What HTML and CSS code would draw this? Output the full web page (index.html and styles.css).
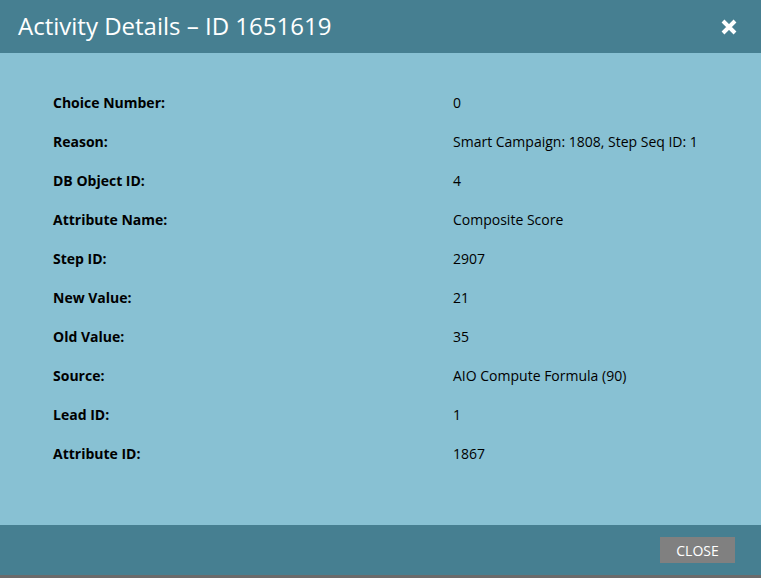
FILE: index.html
```html
<!DOCTYPE html>
<html>
<head>
<meta charset="utf-8">
<link rel="stylesheet" href="styles.css">
</head>
<body>
<div class="dialog">
  <div class="header">
    <h1 class="title">Activity Details – ID 1651619</h1>
    <button class="x-btn" aria-label="Close">
      <svg width="16" height="16" viewBox="0 0 16 16"><path d="M2 2 L14 14 M14 2 L2 14" stroke="#fff" stroke-width="4" stroke-linecap="butt"/></svg>
    </button>
  </div>
  <div class="content">
    <div class="row"><div class="label">Choice Number:</div><div class="value">0</div></div>
    <div class="row"><div class="label">Reason:</div><div class="value">Smart Campaign: 1808, Step Seq ID: 1</div></div>
    <div class="row"><div class="label">DB Object ID:</div><div class="value">4</div></div>
    <div class="row"><div class="label">Attribute Name:</div><div class="value">Composite Score</div></div>
    <div class="row"><div class="label">Step ID:</div><div class="value">2907</div></div>
    <div class="row"><div class="label">New Value:</div><div class="value">21</div></div>
    <div class="row"><div class="label">Old Value:</div><div class="value">35</div></div>
    <div class="row"><div class="label">Source:</div><div class="value">AIO Compute Formula (90)</div></div>
    <div class="row"><div class="label">Lead ID:</div><div class="value">1</div></div>
    <div class="row"><div class="label">Attribute ID:</div><div class="value">1867</div></div>
  </div>
  <div class="footer">
    <button class="close-btn">CLOSE</button>
  </div>
</div>
</body>
</html>
```
FILE: styles.css
```css
* { box-sizing: border-box; }
html, body { margin: 0; padding: 0; }
body {
  width: 761px;
  height: 578px;
  background: #6b6b6b;
  font-family: "Open Sans", "Liberation Sans", sans-serif;
  overflow: hidden;
}
.dialog {
  display: flex;
  flex-direction: column;
  height: 575px;
}
.header {
  flex: 0 0 53px;
  background: #467f91;
  display: flex;
  align-items: center;
  justify-content: space-between;
  padding: 0 24px 0 18px;
}
.title {
  margin: 0;
  color: #fff;
  font-weight: 400;
  font-size: 24px;
  line-height: 1;
  padding-bottom: 1px;
}
.x-btn {
  background: none;
  border: 0;
  padding: 0;
  width: 16px;
  height: 16px;
  display: flex;
}
.content {
  flex: 1 1 auto;
  min-height: 0;
  background: #88c1d3;
  padding: 40px 0 0 53px;
}
.row {
  display: flex;
  height: 39px;
  font-size: 14px;
  line-height: 20px;
  color: #000;
}
.label {
  width: 400px;
  font-weight: 700;
}
.value {
  font-weight: 400;
}
.footer {
  flex: 0 0 50px;
  background: #467f91;
  display: flex;
  align-items: center;
  justify-content: flex-end;
  padding-right: 26px;
}
.close-btn {
  width: 75px;
  height: 26px;
  background: #808080;
  color: #fff;
  border: 0;
  font-family: "Open Sans", "Liberation Sans", sans-serif;
  font-size: 14px;
  padding: 0;
}
```
